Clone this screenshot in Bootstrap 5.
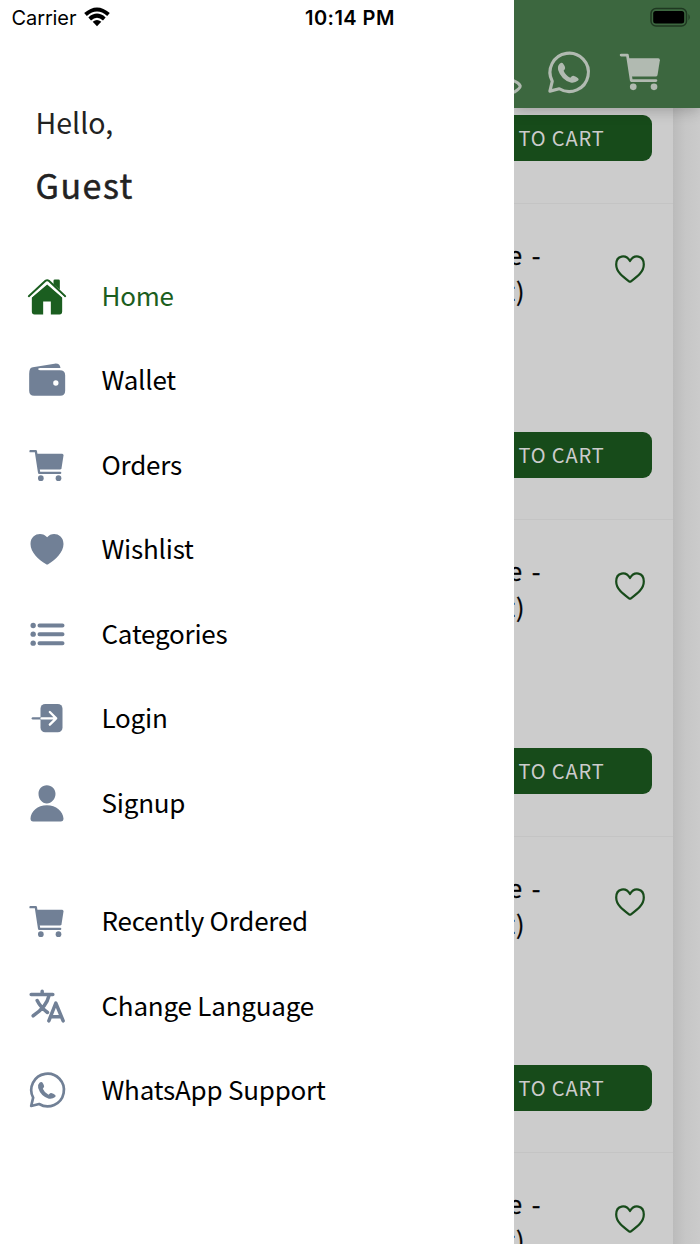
<!DOCTYPE html>
<html lang="en">
<head>
<meta charset="utf-8">
<meta name="viewport" content="width=device-width, initial-scale=1">
<title>Menu</title>
<link href="https://cdn.jsdelivr.net/npm/bootstrap@5.3.0/dist/css/bootstrap.min.css" rel="stylesheet">
<style>
  body { font-family: "Noto Sans CJK SC", sans-serif; color: #000; background: #ccc; }
  .screen { height: 1244px; }
  .drawer { width: 514px; background: #fff; }
  .status { height: 36px; font-family: Inter, sans-serif; font-size: 20px; line-height: 36px; }
  .carrier { width: 305px; padding-left: 11.5px; gap: 8px; letter-spacing: -.1px; }
  .carrier svg { margin-top: -2px; }
  .clock { font-weight: 600; letter-spacing: .45px; }
  .hello { font-size: 28.5px; line-height: 40px; margin: 65.500px 0 0 35.5px; color: #222; }
  .guest { font-size: 34px; line-height: 50px; margin: 18.500px 0 0 35.5px; color: #222; font-weight: 400; letter-spacing: 1.5px; -webkit-text-stroke: .5px #222; }
  .menu { margin-top: 44.25px; }
  .entry { height: 84.5px; padding-left: 27px; gap: 34.5px; font-size: 26px; line-height: 38px; letter-spacing: -.22px; color: #000; }
  .entry span { padding-bottom: 4px; }
  .entry svg { width: 40px; height: 40px; color: #718096; }
  .entry.current, .entry.current svg { color: #1b5e20; }
  .second { margin-top: 34px; }
  .topbar { height: 108px; background: #3c673f; box-shadow: 0 2px 14px rgba(0,0,0,.24); z-index: 2; }
  .tools { gap: 23px; padding: 12.500px 36.5px 0 0; color: #b1bab1; }
  .tools svg { width: 47px; height: 47px; }
  .tools .chat { margin: 1px 2px 0 -2px; }
  .battery { padding: 7px 8.500px 0 0; }
  .catalog { width: 159px; background: #ccc; }
  .gutter { background: linear-gradient(90deg, #bbb, #c6c6c6 45%, #cbcbcb); }
  .product { height: 316.5px; border-top: 1.5px solid #c4c4c4; }
  .product.first { height: 94.5px; border: 0; padding-top: 7px; }
  .info { height: 228px; padding-top: 32px; }
  .pname { font-size: 25px; line-height: 36px; width: 27.5px; white-space: nowrap; letter-spacing: 1px; word-spacing: 2px; -webkit-text-stroke: .3px #000; }
  .fav { margin: 19.5px 28.5px 0 0; }
  .cart-btn { width: 240px; height: 46px; border-radius: 9px; background: #174b1a; color: #ccc; font-size: 20px; line-height: 45px; letter-spacing: .85px; padding-right: 47.5px; margin-right: 21px; }
</style>
</head>
<body>
<svg class="d-none" xmlns="http://www.w3.org/2000/svg">
  <symbol id="i-home" viewBox="52.5 49.5 120 120">
    <path fill="currentColor" d="M132 71V61q0-4 4-4h11q4 0 4 4v27zM67 111l46-39 45 39v42q0 9-8 9h-26v-39h-23v39H75q-8 0-8-9z"/>
    <path fill="none" stroke="currentColor" stroke-width="6" stroke-linecap="round" stroke-linejoin="round" d="M58 107l50-46q5-4 10 0l49 46"/>
    <path fill="none" stroke="#fff" stroke-width="4" stroke-linejoin="round" d="M63 111l50-44 50 44"/>
  </symbol>
  <symbol id="i-wallet" viewBox="52.5 303 120 120">
    <path fill="currentColor" d="M62 326q2-3 8-4l65-11q16-2 18 13H93q-7 0-7 3 0 4 7 4h58q16 0 16 15v46q0 15-15 15H74q-15 0-15-15v-51q0-9 3-15z"/>
    <circle cx="139" cy="369" r="8" fill="#fff"/>
  </symbol>
  <symbol id="i-cart" viewBox="52.5 46.5 120 120">
    <g fill="none" stroke="currentColor" stroke-width="7" stroke-linecap="round" stroke-linejoin="round">
      <path d="M63 62h16l10 65h63"/>
    </g>
    <path fill="currentColor" d="M80 70h78q4 0 4 5l-6 38q-1 4-5 4H88z"/>
    <circle cx="94" cy="143" r="8.500" fill="currentColor"/><circle cx="147" cy="143" r="8.500" fill="currentColor"/>
  </symbol>
  <symbol id="i-heart" viewBox="52.5 300 120 120">
    <path fill="currentColor" d="M113 322C126 304 162 310 162 342C162 367 138 389 117 402Q113 405 109 402C87 389 63 367 63 342C63 310 99 304 113 322z"/>
  </symbol>
  <symbol id="i-list" viewBox="52.5 43.5 120 120">
    <g fill="currentColor"><circle cx="71" cy="75" r="8"/><circle cx="71" cy="101" r="8"/><circle cx="71" cy="128" r="8"/></g>
    <path stroke="currentColor" stroke-width="12" stroke-linecap="round" d="M90 75h69M90 101h69M90 128h69"/>
  </symbol>
  <symbol id="i-login" viewBox="52.5 297 120 120">
    <rect x="93" y="312" width="66" height="85" rx="14" fill="currentColor"/>
    <path stroke="currentColor" stroke-width="7" stroke-linecap="round" d="M70 355h24"/>
    <path fill="none" stroke="#fff" stroke-width="7" stroke-linecap="round" stroke-linejoin="round" d="M96 355h44M121 336l19 19-19 19"/>
  </symbol>
  <symbol id="i-user" viewBox="52.5 40.5 120 120">
    <path fill="currentColor" d="M112 44c15 0 26 11 26 26 0 16-12 29-26 29S87 86 87 70c0-15 10-26 25-26zM63 144c1-21 21-40 49-40s49 19 50 40q0 9-8 9H71q-8 0-8-9z"/>
  </symbol>
  <symbol id="i-lang" viewBox="52.5 49.5 120 120">
    <path fill="none" stroke="currentColor" stroke-width="10.500" stroke-linecap="round" stroke-linejoin="round" d="M98 62v8M65 72h65M119 74q-8 36-48 62M83 90q10 20 31 36M118 151l21-53 22 53M126 139h27"/>
  </symbol>
  <symbol id="i-whatsapp" viewBox="52.5 303 120 120">
    <path fill="none" stroke="currentColor" stroke-width="8" stroke-linejoin="round" d="M65 408l6-25a49 49 0 1 1 18 19z"/>
    <path fill="currentColor" d="M90 338q5-4 8-1 5 6 6 12 0 3-4 7 5 12 17 18 5-6 8-5 7 2 12 6 3 3 0 6-8 7-19 5-24-7-32-32-2-11 4-16z"/>
  </symbol>
  <symbol id="i-call" viewBox="-60 143.5 120 120">
    <path fill="none" stroke="currentColor" stroke-width="8" stroke-linecap="round" d="M32 224q14 5 18 13 2 6-14 16"/>
  </symbol>
  <symbol id="i-fav" viewBox="0 0 30 28">
    <path fill="none" stroke="#174b1a" stroke-width="2.200" stroke-linejoin="round" d="M15 6C11-1 1.200 0 1.200 9.500C1.200 17 8 22 14 26.300Q15 27 16 26.300C22 22 28.800 17 28.800 9.500C28.800 0 19-1 15 6z"/>
  </symbol>
</svg>

<div class="screen d-flex overflow-hidden">
  <aside class="drawer flex-shrink-0">
    <div class="status d-flex">
      <div class="carrier d-flex align-items-center"><span>Carrier</span>
        <svg width="26" height="20" viewBox="0 0 26 20"><g fill="none" stroke="#000" stroke-width="4"><path d="M1.500 7.500Q13-2.500 24.500 7.500"/><path d="M5.700 11.900Q13 5.500 20.300 11.900"/></g><path d="M8.700 14.800Q13 11.400 17.300 14.800L13 19.200z"/></svg>
      </div>
      <span class="clock">10:14 PM</span>
    </div>
    <p class="hello mb-0">Hello,</p>
    <h1 class="guest mb-0">Guest</h1>
    <nav class="menu">
      <a class="entry current d-flex align-items-center text-decoration-none" href="#"><svg><use href="#i-home"/></svg><span>Home</span></a>
      <a class="entry d-flex align-items-center text-decoration-none" href="#"><svg><use href="#i-wallet"/></svg><span>Wallet</span></a>
      <a class="entry d-flex align-items-center text-decoration-none" href="#"><svg><use href="#i-cart"/></svg><span>Orders</span></a>
      <a class="entry d-flex align-items-center text-decoration-none" href="#"><svg><use href="#i-heart"/></svg><span>Wishlist</span></a>
      <a class="entry d-flex align-items-center text-decoration-none" href="#"><svg><use href="#i-list"/></svg><span>Categories</span></a>
      <a class="entry d-flex align-items-center text-decoration-none" href="#"><svg><use href="#i-login"/></svg><span>Login</span></a>
      <a class="entry d-flex align-items-center text-decoration-none" href="#"><svg><use href="#i-user"/></svg><span>Signup</span></a>
      <div class="second">
        <a class="entry d-flex align-items-center text-decoration-none" href="#"><svg><use href="#i-cart"/></svg><span>Recently Ordered</span></a>
        <a class="entry d-flex align-items-center text-decoration-none" href="#"><svg><use href="#i-lang"/></svg><span>Change Language</span></a>
        <a class="entry d-flex align-items-center text-decoration-none" href="#"><svg><use href="#i-whatsapp"/></svg><span>WhatsApp Support</span></a>
      </div>
    </nav>
  </aside>

  <main class="flex-grow-1 d-flex flex-column overflow-hidden">
    <header class="topbar position-relative flex-shrink-0">
      <div class="status battery d-flex justify-content-end">
        <svg width="42" height="20" viewBox="0 0 42 20"><rect x="1" y="1.500" width="35.500" height="17.500" rx="5" fill="none" stroke="#1f3821" stroke-width="1.500"/><rect x="3.200" y="4" width="31" height="12.500" rx="2.500"/><path d="M38.500 7q2.500 3 0 6.500z" fill="#1f3821"/></svg>
      </div>
      <div class="tools d-flex justify-content-end">
        <svg class="flex-shrink-0"><use href="#i-call"/></svg>
        <svg class="chat flex-shrink-0"><use href="#i-whatsapp"/></svg>
        <svg class="flex-shrink-0"><use href="#i-cart"/></svg>
      </div>
    </header>
    <div class="d-flex flex-grow-1 overflow-hidden">
      <div class="catalog flex-shrink-0 overflow-hidden">
        <div class="product first d-flex justify-content-end"><div class="cart-btn flex-shrink-0 text-end">ADD TO CART</div></div>
        <div class="product"><div class="info d-flex justify-content-between"><div class="pname d-flex flex-column align-items-end"><span>Rice -</span><span class="pe-3">(Pkt)</span></div><svg class="fav" width="30" height="28"><use href="#i-fav"/></svg></div><div class="d-flex justify-content-end"><div class="cart-btn flex-shrink-0 text-end">ADD TO CART</div></div></div>
        <div class="product"><div class="info d-flex justify-content-between"><div class="pname d-flex flex-column align-items-end"><span>Rice -</span><span class="pe-3">(Pkt)</span></div><svg class="fav" width="30" height="28"><use href="#i-fav"/></svg></div><div class="d-flex justify-content-end"><div class="cart-btn flex-shrink-0 text-end">ADD TO CART</div></div></div>
        <div class="product"><div class="info d-flex justify-content-between"><div class="pname d-flex flex-column align-items-end"><span>Rice -</span><span class="pe-3">(Pkt)</span></div><svg class="fav" width="30" height="28"><use href="#i-fav"/></svg></div><div class="d-flex justify-content-end"><div class="cart-btn flex-shrink-0 text-end">ADD TO CART</div></div></div>
        <div class="product"><div class="info d-flex justify-content-between"><div class="pname d-flex flex-column align-items-end"><span>Rice -</span><span class="pe-3">(Pkt)</span></div><svg class="fav" width="30" height="28"><use href="#i-fav"/></svg></div></div>
      </div>
      <div class="gutter flex-grow-1"></div>
    </div>
  </main>
</div>
<script src="https://cdn.jsdelivr.net/npm/bootstrap@5.3.0/dist/js/bootstrap.bundle.min.js"></script>
</body>
</html>
